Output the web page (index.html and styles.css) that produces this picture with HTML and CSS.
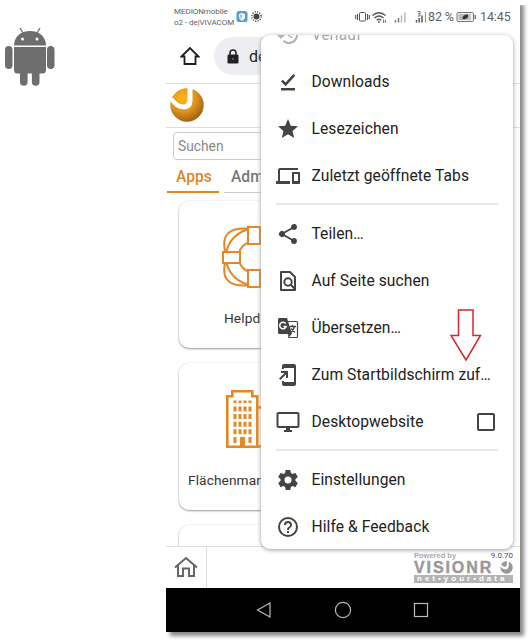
FILE: index.html
```html
<!DOCTYPE html>
<html lang="de">
<head>
<meta charset="utf-8">
<title>VisionR</title>
<link rel="stylesheet" href="styles.css">
</head>
<body>
<main class="page">
  <aside class="platform">
    <svg width="50" height="59" viewBox="0 0 50 59" fill="#6e6e6e">
      <path d="M15 0l3.500 6M35 0l-3.500 6" stroke="#6e6e6e" stroke-width="1.300"/>
      <path d="M9 17.500C9 9 15.500 3 25 3s16 6 16 14.500z"/>
      <path d="M9 19h32v23q0 3.500-3.500 3.500H34.500V54a3.800 3.800 0 0 1-7.600 0v-8.500h-4.300V54a3.800 3.800 0 0 1-7.600 0v-8.500h-2.500Q9 45.500 9 42z"/>
      <rect x="0" y="18" width="7.500" height="23" rx="3.750"/><rect x="42" y="18" width="7.500" height="23" rx="3.750"/>
      <circle cx="17.500" cy="11" r="1.500" fill="#fff"/><circle cx="32" cy="11" r="1.500" fill="#fff"/>
    </svg>
  </aside>

  <section class="phone">
    <header class="status">
      <div class="carrier"><span>MEDIONmobile</span><span>o2 - de|VIVACOM</span></div>
      <svg class="badges" width="28" height="14" viewBox="0 0 28 14">
        <rect x=".500" y="1" width="11" height="11" rx="2.500" fill="#5b9bd0"/>
        <path d="M6 3l3 1v3q0 2.500-3 4Q3 9.500 3 7V4z" fill="#eef8ff"/><path d="M6 4.500V9Q4 8 4 6.500V5z" fill="#9cc5e6"/>
        <circle cx="20.500" cy="6.500" r="3" fill="#444"/><circle cx="20.500" cy="6.500" r="4.700" fill="none" stroke="#555" stroke-width="1.500" stroke-dasharray="1.200 1.260"/>
      </svg>
      <svg class="signals" width="73" height="14" viewBox="0 0 73 14" fill="none" stroke="#555">
        <rect x="4.500" y="2.500" width="6" height="8.500" rx="1"/><path d="M2.500 4v6M12.500 4v6M.700 5v4M14.300 5v4" stroke-width="1.100"/>
        <path d="M17.500 5.500q6.500-5.500 13 0M19.500 8q4.500-4 9 0M21.700 10.200q2.300-2 4.600 0" stroke-width="1.300"/><circle cx="24" cy="12" r=".9" fill="#555" stroke="none"/><path d="M28.500 9.500v3.500M30.300 9.500v3.500" stroke-width=".8"/>
        <path d="M40.500 12.500V10M43.500 12.500V8" stroke="#777" stroke-width="1.500"/><path d="M46.500 12.500V5.500M49.800 12.500V2.500" stroke="#bbb" stroke-width="1.500"/>
        <path d="M61.500 12.500V10M64.200 12.500V8M67 12.500V5.500" stroke-width="1.500"/><path d="M70.500 12.500V2" stroke="#999" stroke-width="1.200"/><path d="M62.500 1.500h2.500v4.500h-2.500M63 3.800h2" stroke-width=".8"/>
      </svg>
      <span class="percent">82 %</span>
      <svg class="battery" width="21" height="12" viewBox="0 0 21 12"><rect x="1" y="1.500" width="16.500" height="9" rx="1" fill="#eee" stroke="#777"/><rect x="2.500" y="3" width="12" height="6" fill="#bbb"/><path d="M18.500 4v4h1.500V4z" fill="#777"/><path d="M6.500 8Q6 3.500 12 3.500 12.500 9 6.500 8z" fill="#333"/></svg>
      <span class="clock">14:45</span>
    </header>

    <div class="urlbar">
      <svg width="20" height="20" viewBox="0 0 20 20" fill="none" stroke="#1f1f1f" stroke-width="1.800"><path d="M1.500 10.500L10 2l8.500 8.500h-3V18h-11v-7.500z"/></svg>
      <div class="address">
        <svg width="12" height="15" viewBox="0 0 12 15"><path d="M3 6V4a3 3 0 0 1 6 0v2" fill="none" stroke="#222" stroke-width="1.600"/><rect x=".5" y="5.500" width="11" height="9" rx="1.300" fill="#222"/><circle cx="6" cy="10" r="1" fill="#666"/></svg>
        <span>de</span>
      </div>
    </div>

    <div class="brand">
      <svg width="34" height="34" viewBox="0 0 34 34">
        <defs><radialGradient id="orb" cx=".38" cy=".3" r=".78"><stop offset="0" stop-color="#ffb916"/><stop offset=".5" stop-color="#df941f"/><stop offset="1" stop-color="#955711"/></radialGradient></defs>
        <circle cx="17" cy="17" r="16.700" fill="url(#orb)"/>
        <path d="M0 11.500L3 9.500Q7 16 13.500 16.500 17.500 16 17.500 11V0H22.500V13Q22 21 14 21.500 5 21 0 12.500z" fill="#fff"/>
      </svg>
    </div>

    <div class="workspace">
      <div class="search">Suchen</div>
      <nav class="tabs"><span class="tab active">Apps</span><span class="tab admin">Adm</span></nav>
      <div class="cards">
        <article class="card">
          <svg width="64" height="64" viewBox="0 0 64 64" fill="none" stroke="#e58724" stroke-width="2">
            <circle cx="32" cy="32" r="28"/><circle cx="32" cy="32" r="15.500"/>
            <path d="M3 26Q-2 2 25 3.500M39 3.500Q66 2 61 26M3 38q-5 24 22 22.500M39 60.500Q66 62 61 38"/>
            <g fill="#fff"><rect x="26" y="2" width="12" height="17"/><rect x="26" y="45" width="12" height="17"/><rect x="1" y="27" width="17" height="11"/><rect x="46" y="27" width="17" height="11"/></g>
          </svg>
          <span>Helpd</span>
        </article>
        <article class="card estate">
          <svg width="62" height="58" viewBox="0 0 62 58" fill="none" stroke="#e58724" stroke-width="2.600">
            <path d="M1.300 56.700V6.300h5V1.300h20v5h5v50.400zM31 17.500h28v39H31"/>
            <path d="M9 10.500v2.500M14 10.500v2.500M19 10.500v2.500M24 10.500v2.500" stroke-width="3"/>
            <path d="M9 16.500v28M14 16.500v28M19 16.500v28M24 16.500v28" stroke-width="3" stroke-dasharray="5 2.600"/>
            <path d="M9 47v6M24 47v6" stroke-width="3"/><path d="M16.500 47v9" stroke-width="5"/>
          </svg>
          <span>Flächenmar</span>
        </article>
        <article class="card"></article>
      </div>
    </div>

    <footer class="appbar">
      <div class="home"><svg width="24" height="22" viewBox="0 0 24 22" fill="none" stroke="#666" stroke-width="2"><path d="M1 11.500L12 2l11 9.500M4 9.500V20h5v-7.500h6V20h5V9.500"/></svg></div>
      <div class="credit">
        <div class="credit-top"><b>Powered by</b><span>9.0.70</span></div>
        <div class="wordmark"><b>VISIONR</b><svg width="13" height="13" viewBox="0 0 14 14"><circle cx="7" cy="7" r="6.700" fill="#999"/><path d="M0 4.500L1 3.500Q4 7 6.500 6 7.500 5.500 7.500 0H9.500V6Q8.500 9.500 5 9 2 8.500 0 6z" fill="#fff"/></svg></div>
        <div class="slogan">net•your•data</div>
      </div>
    </footer>

    <footer class="softkeys">
      <svg width="16" height="18" viewBox="0 0 16 18"><path d="M14 2v14L1.500 9z"/></svg>
      <svg width="18" height="18" viewBox="0 0 18 18"><circle cx="9" cy="9" r="7.600"/></svg>
      <svg width="16" height="16" viewBox="0 0 16 16"><rect x="1.500" y="1.500" width="13" height="13"/></svg>
    </footer>

    <div class="menu">
      <div class="item faded"><svg viewBox="0 0 24 24"><path d="M13 3a9 9 0 0 0-9 9H1l3.900 3.900L9 12H6a7 7 0 1 1 2.100 4.900l-1.400 1.500A9 9 0 1 0 13 3zm-1 5v5l4.300 2.500.7-1.200-3.500-2.100V8z"/></svg><span>Verlauf</span></div>
      <div class="item"><svg viewBox="0 0 24 24"><path d="M5 18h14v2.500H5zM9.600 16.200L5 11.600 6.800 9.800l2.800 2.800L17.400 4 19.300 5.800z"/></svg><span>Downloads</span></div>
      <div class="item"><svg viewBox="0 0 24 24"><path d="M12 17.270L18.180 21l-1.640-7.030L22 9.240l-7.190-.61L12 2 9.190 8.630 2 9.240l5.460 4.730L5.820 21z"/></svg><span>Lesezeichen</span></div>
      <div class="item"><svg viewBox="0 0 24 24"><path d="M4 6h18V4H4c-1.100 0-2 .9-2 2v11H0v3h14v-3H4V6zm19 2h-6c-.55 0-1 .45-1 1v10c0 .55.450 1 1 1h6c.55 0 1-.45 1-1V9c0-.55-.45-1-1-1zm-1 9h-4v-7h4v7z"/></svg><span>Zuletzt geöffnete Tabs</span></div>
      <hr>
      <div class="item"><svg viewBox="0 0 24 24"><path d="M18 16.080c-.76 0-1.440.3-1.960.77L8.910 12.700c.05-.23.090-.46.090-.7s-.04-.47-.09-.7l7.050-4.110A3 3 0 1 0 15 5c0 .24.040.47.090.7L8.040 9.810a3 3 0 1 0 0 4.380l7.120 4.160c-.05.21-.08.430-.08.650A2.920 2.920 0 1 0 18 16.080z"/></svg><span>Teilen…</span></div>
      <div class="item"><svg viewBox="0 0 24 24"><path d="M14 3H5v18h14V8z" fill="none" stroke="#444" stroke-width="2" stroke-linejoin="round"/><circle cx="12" cy="13" r="3.700" fill="none" stroke="#444" stroke-width="2"/><path d="M14.500 15.500l5 5" stroke="#444" stroke-width="2"/></svg><span>Auf Seite suchen</span></div>
      <div class="item"><svg viewBox="0 0 24 24"><path d="M11 5.500h9.500q1 0 1 1v14q0 1-1 1H12.500" fill="none" stroke="#444" stroke-width="1.200"/><path d="M3 2h8l5 16H3.500q-1.500 0-1.500-1.500v-13Q2 2 3 2z"/><path d="M12 17.500h4L12.500 22z"/><path d="M9.700 7.500a3.300 3.300 0 1 0 .5 3H7.500" fill="none" stroke="#fff" stroke-width="1.500"/><path d="M13.500 10.500H20M16.500 9v1.500M18.500 10.500q-1 4-4 6M15 12.500l4 4" fill="none" stroke="#444" stroke-width="1.300"/></svg><span>Übersetzen…</span></div>
      <div class="item"><svg viewBox="0 0 24 24"><path d="M18 1.010L8 1c-1.100 0-2 .9-2 2v3h2V5h10v14H8v-1H6v3c0 1.100.9 2 2 2h10c1.100 0 2-.9 2-2V3c0-1.100-.9-1.990-2-1.990zM10 15h2V8H5v2h3.590L3 15.590 4.410 17 10 11.410z"/></svg><span>Zum Startbildschirm zuf…</span></div>
      <div class="item"><svg viewBox="0 0 24 24"><path d="M21.500 2h-19C1.400 2 .5 2.900.5 4v12c0 1.100.9 2 2 2H10v2H8v2h8v-2h-2v-2h7.500c1.100 0 2-.9 2-2V4c0-1.100-.9-2-2-2zm0 14h-19V4h19z"/></svg><span>Desktopwebsite</span><i class="checkbox"></i></div>
      <hr>
      <div class="item"><svg viewBox="0 0 24 24"><path d="M19.430 12.980c.04-.32.070-.64.070-.98s-.03-.66-.07-.98l2.110-1.650c.19-.15.240-.42.120-.64l-2-3.460c-.12-.22-.39-.3-.61-.22l-2.490 1c-.52-.4-1.080-.73-1.690-.98l-.38-2.650A.488.488 0 0 0 14 2h-4c-.25 0-.46.180-.49.420l-.38 2.650c-.61.250-1.170.59-1.690.98l-2.490-1c-.23-.09-.49 0-.61.220l-2 3.460c-.13.220-.07.490.12.640l2.110 1.650c-.04.320-.07.650-.07.980s.03.660.07.980l-2.110 1.650c-.19.150-.24.420-.12.640l2 3.460c.12.220.39.300.61.220l2.490-1c.52.400 1.080.730 1.690.980l.38 2.650c.03.240.24.420.49.420h4c.25 0 .46-.18.490-.42l.38-2.650c.61-.25 1.170-.59 1.690-.98l2.490 1c.23.090.49 0 .61-.22l2-3.460c.12-.22.070-.49-.12-.64zM12 15.500a3.500 3.500 0 1 1 0-7 3.500 3.500 0 0 1 0 7z"/></svg><span>Einstellungen</span></div>
      <div class="item"><svg viewBox="0 0 24 24"><path d="M11 18h2v-2h-2v2zm1-16a10 10 0 1 0 0 20 10 10 0 0 0 0-20zm0 18a8 8 0 1 1 0-16 8 8 0 0 1 0 16zm0-14a4 4 0 0 0-4 4h2a2 2 0 1 1 4 0c0 2-3 1.750-3 5h2c0-2.250 3-2.500 3-5a4 4 0 0 0-4-4z"/></svg><span>Hilfe &amp; Feedback</span></div>
    </div>
    <svg class="pointer" width="32" height="53" viewBox="0 0 32 53"><path d="M8.500 1h14.500v25.500h7.500L16 51 1 26.500h7.500z" fill="none" stroke="#d3262d" stroke-width="1.500"/></svg>
  </section>
</main>
</body>
</html>
```

FILE: styles.css
```css
* { box-sizing: border-box; }
body { margin: 0; background: #fff; font-family: Roboto, sans-serif; color: #222; }
svg { display: block; flex: none; }
.page { display: flex; height: 644px; overflow: hidden; }
.platform { width: 166px; padding: 28px 0 0 5px; }
.phone { position: relative; width: 354px; height: 632px; display: flex; flex-direction: column; background: #fff; box-shadow: 4px 4px 4px #888; clip-path: inset(5px -8px -12px 0); }
.status { height: 34px; display: flex; align-items: flex-start; padding-left: 8px; flex: none; color: #606060; white-space: nowrap; }
.carrier { width: 62px; padding-top: 7px; display: flex; flex-direction: column; font-size: 8px; line-height: 10.500px; letter-spacing: -.05px; }
.badges { margin-top: 10px; }
.signals { margin: 10px 0 0 91px; }
.percent, .clock { font-size: 12.500px; line-height: 14px; margin-top: 10px; letter-spacing: -.1px; }
.percent { width: 27px; }
.battery { margin-top: 11px; margin-left: 1px; }
.clock { margin-left: 3px; }
.urlbar { height: 50px; border-bottom: 1px solid #ddd; display: flex; padding: 3px 0 0 14px; gap: 14px; flex: none; }
.urlbar > svg { margin-top: 9px; }
.address { width: 250px; height: 38px; border-radius: 19px; background: #edeef2; display: flex; align-items: center; padding-left: 13px; gap: 10px; font-size: 16px; }
.brand { height: 44px; border-bottom: 1px solid #ddd; padding: 4px; flex: none; }
.workspace { flex: 1; min-height: 0; overflow: hidden; padding: 4px 7px 0; }
.search { height: 28px; border: 1px solid #ccc; border-radius: 4px; padding-left: 4px; font-size: 13.800px; line-height: 26px; color: #888; }
.tabs { display: flex; gap: 5px; height: 33px; margin-left: -6px; }
.tab { height: 33px; border-bottom: 1px solid #ccc; padding-left: 7px; line-height: 35px; font-size: 15.600px; font-weight: 500; color: #777; }
.tab.active { width: 52px; padding-left: 9px; color: #df8526; border-bottom: 2px solid #df8526; }
.admin { flex: 1; }
.cards { display: flex; flex-direction: column; gap: 15px; padding: 8px 0 0 6px; }
.card { width: 156px; height: 147px; flex: none; border-radius: 10px; background: #fff; box-shadow: 0 1px 2px #999, 0 0 2px #e8e8e8; display: flex; flex-direction: column; padding: 24px 0 0 43px; font-size: 13.700px; letter-spacing: .1px; color: #333; }
.card span { margin: 21px 0 0 2px; white-space: nowrap; }
.card.estate { padding: 27px 0 0 47px; }
.card.estate span { margin: 24px 0 0 -38px; }
.appbar { height: 42px; border-top: 1px solid #ddd; display: flex; justify-content: space-between; background: #fff; flex: none; }
.home { width: 41px; border-right: 1px solid #ddd; padding: 9px 0 0 8px; }
.credit { width: 99px; margin-right: 7px; padding-top: 4px; color: #aaa; }
.credit-top { display: flex; justify-content: space-between; height: 10px; font: 7.500px/9px "Liberation Sans", sans-serif; }
.credit-top span { color: #555; font: 8px/9px Roboto, sans-serif; }
.wordmark { height: 13px; display: flex; justify-content: space-between; font: 16px/14px "Liberation Sans", sans-serif; letter-spacing: 1.900px; }
.wordmark b { width: 84px; color: #999; -webkit-text-stroke: .4px #999; }
.slogan { margin-top: 1px; height: 8px; background: #b4b4b4; color: #fff; font: bold 8px/7px "Liberation Sans", sans-serif; letter-spacing: 3px; padding-left: 3px; white-space: nowrap; overflow: hidden; }
.softkeys { height: 44px; background: #000; display: flex; align-items: center; padding-left: 90px; gap: 61.500px; flex: none; }
.softkeys svg { fill: none; stroke: #bbb; stroke-width: 1.200; }
.menu { position: absolute; left: 95px; top: 35px; width: 252px; height: 514px; border-radius: 9px; background: #fff; box-shadow: 0 1px 4px #999; overflow: hidden; }
.item { height: 47px; display: flex; align-items: center; padding: 0 18px 0 15px; font-size: 15.600px; letter-spacing: .07px; white-space: nowrap; color: #222; }
.item svg { width: 24px; height: 24px; fill: #444; margin-right: 11.500px; }
.item.faded { margin-top: -24px; opacity: .4; }
.menu hr { margin: 4px 15px 5.500px; border: 0; height: 1.500px; background: #e8e8e8; }
.checkbox { margin-left: auto; width: 18px; height: 18px; border: 2px solid #444; border-radius: 2px; }
.pointer { position: absolute; left: 284px; top: 309px; }
```
